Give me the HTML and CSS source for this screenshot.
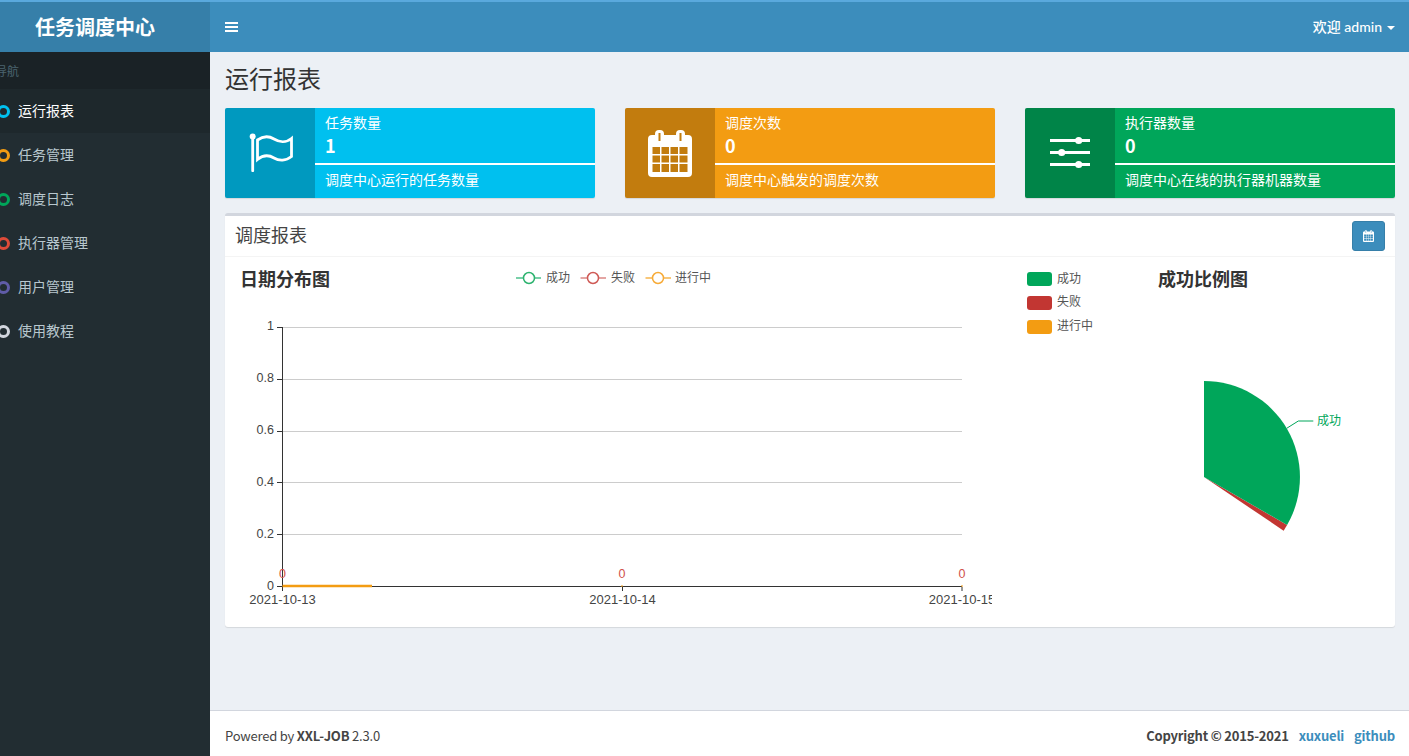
FILE: index.html
```html
<!DOCTYPE html>
<html lang="zh-CN">
<head>
<meta charset="utf-8">
<title>任务调度中心</title>
<link rel="stylesheet" href="styles.css">
</head>
<body>
<svg class="defs" width="0" height="0" aria-hidden="true">
  <symbol id="cal" viewBox="0 0 44 47">
    <path fill-rule="evenodd" fill="currentColor" d="M4 5H40Q44 5 44 9V43Q44 47 40 47H4Q0 47 0 43V9Q0 5 4 5ZM4.5 17h7.5v7h-7.5zM13.500 17h7.500v7h-7.500zM22.500 17h7.500v7h-7.500zM31.500 17h8v7h-8zM4.500 25.500h7.500v7h-7.500zM13.500 25.500h7.500v7h-7.500zM22.500 25.500h7.500v7h-7.500zM31.500 25.500h8v7h-8zM4.500 34h7.500v8h-7.500zM13.500 34h7.500v8h-7.500zM22.500 34h7.500v8h-7.500zM31.500 34h8v8h-8z"/>
    <rect x="7" y="0" width="9" height="14" rx="4" fill="currentColor"/>
    <rect x="28" y="0" width="9" height="14" rx="4" fill="currentColor"/>
    <rect x="10.500" y="3" width="2" height="8" style="fill:var(--slot)"/>
    <rect x="31.500" y="3" width="2" height="8" style="fill:var(--slot)"/>
  </symbol>
</svg>
<div class="app">
  <header class="topbar">
    <a class="logo">任务调度中心</a>
    <nav class="navbar">
      <span class="burger"><i></i><i></i><i></i></span>
      <span class="user">欢迎 admin<b class="caret"></b></span>
    </nav>
  </header>
  <aside class="sidebar">
    <div class="side-label">导航</div>
    <ul class="menu">
      <li class="menu-item active"><i class="ring ring-cyan"></i>运行报表</li>
      <li class="menu-item"><i class="ring ring-orange"></i>任务管理</li>
      <li class="menu-item"><i class="ring ring-green"></i>调度日志</li>
      <li class="menu-item"><i class="ring ring-red"></i>执行器管理</li>
      <li class="menu-item"><i class="ring ring-purple"></i>用户管理</li>
      <li class="menu-item"><i class="ring ring-gray"></i>使用教程</li>
    </ul>
  </aside>
  <main class="main">
    <div class="content">
      <h1 class="page-title">运行报表</h1>
      <section class="info-row">
        <div class="info-box bg-cyan">
          <div class="info-icon">
            <svg width="90" height="90" viewBox="225 108 90 90">
              <rect x="251.300" y="136" width="2.800" height="36" rx="1" fill="#fff"/>
              <circle cx="252.700" cy="136.500" r="3" fill="#fff"/>
              <path d="M257.500 140C263 136 269 136 274 139S286 143 291.500 138.500V156.500C286 161 279 161 274 158S263 155 257.500 159.500Z" fill="none" stroke="#fff" stroke-width="2.800"/>
            </svg>
          </div>
          <div class="info-body">
            <div class="info-text">任务数量</div>
            <div class="info-num">1</div>
            <div class="info-bar"></div>
            <div class="info-desc">调度中心运行的任务数量</div>
          </div>
        </div>
        <div class="info-box bg-orange">
          <div class="info-icon cal-box">
            <svg class="cal-big"><use href="#cal"/></svg>
          </div>
          <div class="info-body">
            <div class="info-text">调度次数</div>
            <div class="info-num">0</div>
            <div class="info-bar"></div>
            <div class="info-desc">调度中心触发的调度次数</div>
          </div>
        </div>
        <div class="info-box bg-green">
          <div class="info-icon">
            <svg width="90" height="90" viewBox="1025 108 90 90" fill="#fff">
              <rect x="1050" y="139" width="40" height="3"/>
              <rect x="1050" y="151" width="40" height="3"/>
              <rect x="1050" y="163" width="40" height="3"/>
              <circle cx="1078.700" cy="140.500" r="3.600"/>
              <circle cx="1061.700" cy="152.500" r="3.600"/>
              <circle cx="1078.700" cy="164.500" r="3.600"/>
            </svg>
          </div>
          <div class="info-body">
            <div class="info-text">执行器数量</div>
            <div class="info-num">0</div>
            <div class="info-bar"></div>
            <div class="info-desc">调度中心在线的执行器机器数量</div>
          </div>
        </div>
      </section>
      <section class="box">
        <div class="box-header">
          <h3 class="box-title">调度报表</h3>
          <button class="cal-btn"><svg class="cal-small"><use href="#cal"/></svg></button>
        </div>
        <div class="box-body">
          <svg class="chart-line" width="757" height="360" viewBox="235 262 757 360">
            <text x="240" y="286" class="chart-title">日期分布图</text>
            <g fill="none" stroke-width="1.500">
              <path d="M516 278H541" stroke="#00a65a" opacity=".7"/>
              <path d="M580.500 278H606" stroke="#c23632" opacity=".6"/>
              <path d="M645.500 278H671" stroke="#f39c12" opacity=".75"/>
            </g>
            <g fill="#fff" stroke-width="1.500">
              <circle cx="529" cy="278" r="5.500" stroke="#2db36f"/>
              <circle cx="593" cy="278" r="5.500" stroke="#cf5a56"/>
              <circle cx="658" cy="278" r="5.500" stroke="#f7ab38"/>
            </g>
            <g class="chart-legend">
              <text x="546" y="282">成功</text>
              <text x="611" y="282">失败</text>
              <text x="675" y="282">进行中</text>
            </g>
            <g stroke="#ccc" stroke-width="1">
              <path d="M282 327.500H962"/>
              <path d="M282 379.500H962"/>
              <path d="M282 431.500H962"/>
              <path d="M282 482.500H962"/>
              <path d="M282 534.500H962"/>
            </g>
            <g stroke="#333" stroke-width="1" fill="none">
              <path d="M282.500 327V591"/>
              <path d="M277 586.500H962"/>
              <path d="M277 327.500H282M277 379.500H282M277 431.500H282M277 482.500H282M277 534.500H282"/>
              <path d="M622.500 587V591M962 587V591"/>
            </g>
            <path d="M282.500 586H372" stroke="#f39c12" stroke-width="2.500"/>
            <path d="M622 585V587M962 585V587" stroke="#f39c12" stroke-width="1"/>
            <g class="axis-y">
              <text x="274" y="330">1</text>
              <text x="274" y="382">0.8</text>
              <text x="274" y="434">0.6</text>
              <text x="274" y="486">0.4</text>
              <text x="274" y="538">0.2</text>
              <text x="274" y="590">0</text>
            </g>
            <g class="axis-x">
              <text x="282.500" y="604">2021-10-13</text>
              <text x="622.500" y="604">2021-10-14</text>
              <text x="962" y="604">2021-10-15</text>
            </g>
            <g class="point-label">
              <text x="282.500" y="578">0</text>
              <text x="622" y="578">0</text>
              <text x="962" y="578">0</text>
            </g>
          </svg>
          <svg class="chart-pie" width="368" height="360" viewBox="1017 262 368 360">
            <rect x="1027" y="272" width="25" height="14" rx="3" fill="#00a65a"/>
            <rect x="1027" y="296" width="25" height="14" rx="3" fill="#c23632"/>
            <rect x="1027" y="320" width="25" height="14" rx="3" fill="#f39c12"/>
            <g class="chart-legend">
              <text x="1057" y="283">成功</text>
              <text x="1057" y="306">失败</text>
              <text x="1057" y="330">进行中</text>
            </g>
            <text x="1158" y="286" class="chart-title">成功比例图</text>
            <path d="M1204 477L1283.600 530.700L1287.100 525Z" fill="#c23632"/>
            <path d="M1204 477V381A96 96 0 0 1 1287.100 525Z" fill="#00a65a"/>
            <path d="M1286.700 428.300L1298.300 421H1313.300" fill="none" stroke="#00a65a" stroke-width="1"/>
            <text x="1317" y="425" class="pie-label">成功</text>
          </svg>
        </div>
      </section>
    </div>
    <footer class="footer">
      <span>Powered by <b>XXL-JOB</b> 2.3.0</span>
      <span class="copy"><b>Copyright © 2015-2021</b><a>xuxueli</a><a>github</a></span>
    </footer>
  </main>
</div>
</body>
</html>
```
FILE: styles.css
```css
* { box-sizing: border-box; }
html, body { margin: 0; height: 100%; overflow: hidden; }
body {
  font-family: "Noto Sans CJK SC", "Noto Sans", sans-serif;
  font-size: 14px;
  line-height: 20px;
  color: #333;
  background: #ecf0f5;
}
.defs { position: absolute; }
.app {
  display: grid;
  grid-template-columns: 210px 1fr;
  grid-template-rows: 52px 1fr;
  width: 1409px;
  height: 756px;
}

/* top bar */
.topbar {
  grid-column: 1 / 3;
  display: flex;
  border-top: 2px solid #5aa9dd;
}
.logo {
  width: 210px;
  padding-right: 20px;
  background: #367fa9;
  color: #fff;
  font-size: 20px;
  font-weight: 700;
  line-height: 50px;
  text-align: center;
}
.navbar {
  flex: 1;
  display: flex;
  justify-content: space-between;
  align-items: center;
  padding: 0 14px 0 15px;
  background: #3c8dbc;
  color: #fff;
}
.burger { display: flex; flex-direction: column; gap: 2px; width: 13px; margin-top: -0.5px; }
.burger i { height: 2px; background: #fff; }
.user {
  display: flex;
  align-items: center;
  margin-top: -1px;
  font-family: Lato, "Noto Sans CJK SC", sans-serif;
  font-weight: 500;
}
.caret {
  width: 0;
  height: 0;
  margin-left: 5px;
  margin-top: 2px;
  border-top: 4px solid #fff;
  border-left: 4px solid transparent;
  border-right: 4px solid transparent;
}

/* sidebar */
.sidebar { background: #222d32; overflow: hidden; }
.side-label {
  height: 37px;
  background: #1a2226;
  color: #4b646f;
  font-size: 12px;
  line-height: 37px;
  text-indent: -5px;
}
.menu { list-style: none; margin: 0; padding: 0; }
.menu-item {
  display: flex;
  align-items: center;
  height: 44px;
  padding-bottom: 2px;
  color: #b8c7ce;
}
.menu-item.active { background: #1e282c; color: #fff; }
.ring {
  flex: none;
  width: 13px;
  height: 13px;
  margin: 2px 8px 0 -3px;
  border: 3px solid;
  border-radius: 50%;
}
.ring-cyan { color: #00c0ef; }
.ring-orange { color: #f39c12; }
.ring-green { color: #00a65a; }
.ring-red { color: #dd4b39; }
.ring-purple { color: #605ca8; }
.ring-gray { color: #d2d6de; }

/* main */
.main { display: flex; flex-direction: column; min-width: 0; }
.content { flex: 1; padding: 0 14px 0 15px; }
.page-title {
  margin: 0;
  padding-top: 11px;
  height: 56px;
  font-size: 24px;
  font-weight: 400;
  line-height: 30px;
}
.info-row {
  display: grid;
  grid-template-columns: repeat(3, 370px);
  column-gap: 30px;
}
.info-box {
  display: flex;
  height: 90px;
  border-radius: 2px;
  box-shadow: 0 1px 1px rgba(0, 0, 0, .1);
  color: #fff;
  overflow: hidden;
}
.bg-cyan { background: #00c0ef; }
.bg-orange { background: #f39c12; }
.bg-green { background: #00a65a; }
.info-icon {
  flex: none;
  width: 90px;
  height: 90px;
  background: rgba(0, 0, 0, .2);
}
.info-icon svg { display: block; }
.cal-box { --slot: #c27d0e; display: flex; align-items: flex-start; justify-content: center; }
.cal-big { width: 44px; height: 47px; margin-top: 22px; margin-left: -1px; }
.info-body { flex: 1; padding-top: 4px; }
.info-text { padding-left: 10px; height: 20px; }
.info-num { padding-left: 10px; height: 26px; font-size: 18px; font-weight: 700; line-height: 26px; }
.info-bar { height: 2px; margin-top: 5px; background: #fff; }
.info-desc { padding: 4px 0 0 10px; }

/* box */
.box {
  width: 1170px;
  height: 414px;
  margin-top: 15px;
  border-top: 3px solid #d2d6de;
  border-radius: 3px;
  background: #fff;
  box-shadow: 0 1px 1px rgba(0, 0, 0, .1);
}
.box-header {
  display: flex;
  justify-content: space-between;
  align-items: flex-start;
  height: 41px;
  padding: 0 10px;
  border-bottom: 1px solid #f4f4f4;
}
.box-title { margin: 6px 0 0; font-size: 18px; font-weight: 400; line-height: 24px; color: #444; }
.cal-btn {
  display: flex;
  align-items: center;
  justify-content: center;
  width: 33px;
  height: 30px;
  padding: 0;
  margin-top: 5px;
  border: 1px solid #367fa9;
  border-radius: 3px;
  background: #3c8dbc;
  color: #fff;
  --slot: #3c8dbc;
}
.cal-small { width: 11px; height: 12px; }
.box-body {
  display: flex;
  gap: 25px;
  padding: 5px 10px 0;
}
.chart-line, .chart-pie { flex: none; display: block; }
.chart-line text, .chart-pie text {
  font-family: "Liberation Sans", "Noto Sans CJK SC", sans-serif;
}
.chart-title { font-size: 18px; font-weight: 700; fill: #333; }
.chart-legend { font-size: 12px; fill: #555; }
.axis-y { font-size: 12.500px; fill: #444; text-anchor: end; }
.axis-x { font-size: 13px; fill: #444; text-anchor: middle; }
.point-label { font-size: 12.500px; fill: #d0504a; text-anchor: middle; }
.pie-label { font-size: 12px; fill: #00a65a; }

/* footer */
.footer {
  display: flex;
  justify-content: space-between;
  align-items: center;
  height: 46px;
  padding: 4px 14px 0 15px;
  border-top: 1px solid #d2d6de;
  background: #fff;
  color: #444;
  font-size: 13px;
  letter-spacing: -.2px;
}
.footer b { font-weight: 700; }
.copy a { margin-left: 10px; color: #3c8dbc; font-weight: 700; }
```
